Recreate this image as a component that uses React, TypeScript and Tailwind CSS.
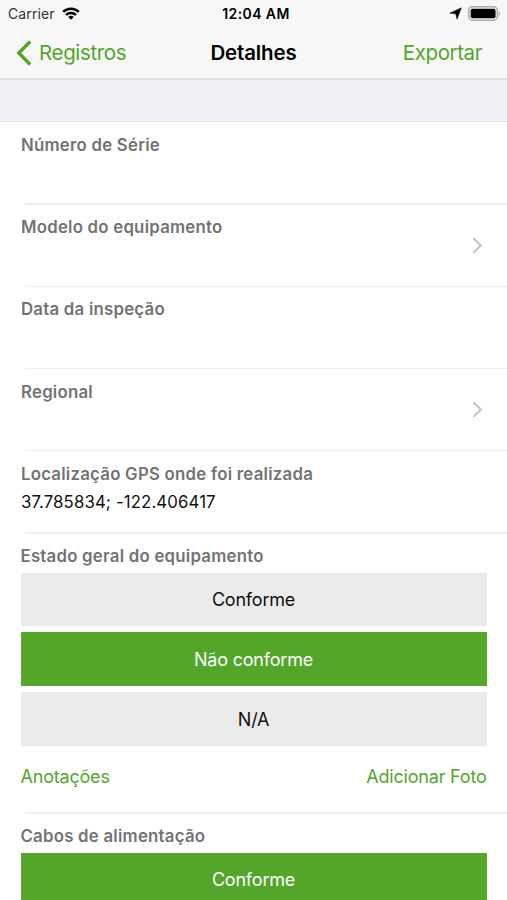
import React from "react";

type Choice = "Conforme" | "Não conforme" | "N/A";

interface Field {
  label: string;
  value?: string;
  hasDetail?: boolean;
}

interface ChoiceRowProps {
  label: string;
  selected: Choice;
  choices: Choice[];
  children?: React.ReactNode;
}

const FIELDS: Field[] = [
  { label: "Número de Série" },
  { label: "Modelo do equipamento", hasDetail: true },
  { label: "Data da inspeção" },
  { label: "Regional", hasDetail: true },
  { label: "Localização GPS onde foi realizada", value: "37.785834; -122.406417" },
];

function StatusBar() {
  return (
    <div className="relative flex h-[27px] items-center justify-between pr-[6px] pl-[8px] text-[14px]">
      <div className="flex items-center gap-[7px]">
        <span className="tracking-[0.1px] text-[#333]">Carrier</span>
        <svg width="18" height="13" viewBox="0 0 18 13" fill="none" stroke="#000" strokeWidth="2.5">
          <path d="M1.2 4.9a11 11 0 0 1 15.6 0" />
          <path d="M4 8a7 7 0 0 1 10 0" />
          <path d="M9 12.8 6.2 10a4 4 0 0 1 5.6 0z" fill="#000" stroke="none" />
        </svg>
      </div>
      <span className="absolute inset-x-0 pl-[5px] text-center font-semibold tracking-[0.4px]">12:04 AM</span>
      <div className="flex items-center gap-[6px]">
        <svg width="13" height="13" viewBox="0 0 13 13">
          <path d="M12.4 0.8 8 12.2 6.7 6.8 0.8 6.2z" fill="#000" stroke="#000" strokeWidth="0.5" strokeLinejoin="round" />
        </svg>
        <svg width="33" height="15" viewBox="0 0 33 15">
          <rect x="0.8" y="0.8" width="28.6" height="13.4" rx="3.8" fill="none" stroke="#aaa" strokeWidth="1.5" />
          <rect x="2.7" y="2.7" width="24.8" height="9.6" rx="1.8" fill="#000" />
          <path d="M30.6 5.2a2.6 2.6 0 0 1 0 4.6z" fill="#a8a8a8" />
        </svg>
      </div>
    </div>
  );
}

function NavBar() {
  return (
    <div className="relative flex h-[51px] items-center justify-between pr-[25px] pl-[16px] text-[20.5px] text-[#53a62a]">
      <button className="flex items-center gap-[7px]">
        <svg width="16" height="26" viewBox="0 0 16 26" fill="none" stroke="currentColor" strokeWidth="3.4">
          <path d="M14.2 1.5 2.8 13l11.4 11.5" />
        </svg>
        <span className="leading-6 tracking-[-0.35px]">Registros</span>
      </button>
      <h1 className="pointer-events-none absolute inset-x-0 text-center leading-6 font-semibold tracking-[-0.15px] text-black">
        Detalhes
      </h1>
      <button className="leading-6 tracking-[-0.4px]">Exportar</button>
    </div>
  );
}

function Label({ children }: { children: React.ReactNode }) {
  return (
    <h2 className="h-[21.5px] text-[16.8px] leading-[22px] font-semibold tracking-[0.24px] text-[#737373]">
      {children}
    </h2>
  );
}

function Separator() {
  return <div className="ml-[25px] h-[1.25px] bg-[#eeeeef]" />;
}

function FieldRow({ label, value, hasDetail }: Field) {
  return (
    <div>
      <div className="flex h-[81px] items-center justify-between pr-[24px] pl-[21px]">
        <div className="h-full pt-[11.5px]">
          <Label>{label}</Label>
          {value && <p className="mt-[7px] text-[16.8px] leading-[22px] tracking-[0.12px] text-[#111]">{value}</p>}
        </div>
        {hasDetail && (
          <svg width="11" height="17" viewBox="0 0 11 17" fill="none" stroke="#c3c3c6" strokeWidth="2">
            <path d="M1.5 1.3 8.9 8.5 1.5 15.7" />
          </svg>
        )}
      </div>
      <Separator />
    </div>
  );
}

function ChoiceRow({ label, selected, choices, children }: ChoiceRowProps) {
  return (
    <div>
      <div className="px-[20.5px] pt-[11.5px]">
        <Label>{label}</Label>
        <div className="mt-[6px] flex flex-col gap-[6px]">
          {choices.map((name) => (
            <button
              key={name}
              className={`h-[53.8px] w-full text-[18px] tracking-[-0.2px] ${
                name === selected ? "bg-[#53a62a] text-white" : "bg-[#ebebeb] text-[#111]"
              }`}
            >
              {name}
            </button>
          ))}
        </div>
      </div>
      {children}
    </div>
  );
}

export default function App() {
  return (
    <div className="h-[900px] w-full overflow-hidden bg-white font-['Inter',sans-serif] text-black">
      <header className="bg-[#f7f7f7]">
        <StatusBar />
        <NavBar />
      </header>
      <div className="h-[44.3px] border-t-2 border-b border-t-[#dfdfe2] border-b-[#e6e6e9] bg-[#efeff4]" />
      <main>
        {FIELDS.map((field) => (
          <FieldRow key={field.label} {...field} />
        ))}
        <ChoiceRow
          label="Estado geral do equipamento"
          selected="Não conforme"
          choices={["Conforme", "Não conforme", "N/A"]}
        >
          <div className="flex h-[66.5px] items-center justify-between px-[20.5px] pb-[5px] text-[18px] tracking-[-0.2px] text-[#53a62a]">
            <button>Anotações</button>
            <button>Adicionar Foto</button>
          </div>
          <Separator />
        </ChoiceRow>
        <ChoiceRow label="Cabos de alimentação" selected="Conforme" choices={["Conforme"]} />
      </main>
    </div>
  );
}
